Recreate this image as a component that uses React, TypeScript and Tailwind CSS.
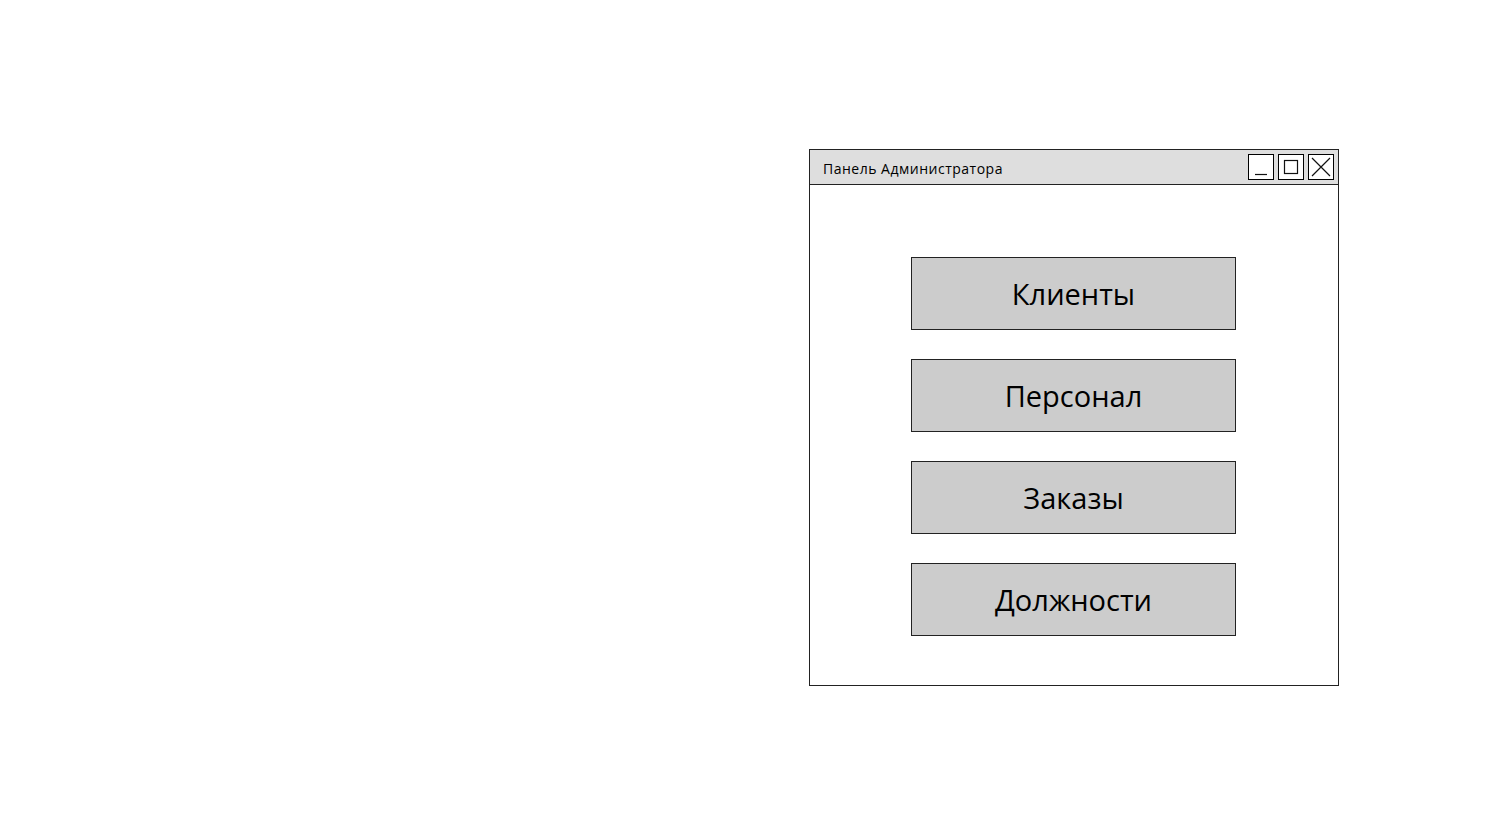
const items = ["Клиенты", "Персонал", "Заказы", "Должности"];

function WinButton({ kind }: { kind: "min" | "max" | "close" }) {
    return (
        <div className="w-[26px] h-[26px] border border-black bg-white flex items-center justify-center">
            <svg width="24" height="24" viewBox="0 0 24 24" fill="none" stroke="#111" strokeWidth="1.2">
                {kind === "min" && <path d="M6 19.5h12" />}
                {kind === "max" && <rect x="5.5" y="5.5" width="13" height="13" />}
                {kind === "close" && <path d="M3 3l18 18M21 3L3 21" />}
            </svg>
        </div>
    );
}

export default function App() {
    return (
        <div className="w-[1500px] h-[820px] bg-white pl-[809px] pt-[149px]" style={{ fontFamily: '"Comic Sans MS", "Open Sans", "Liberation Sans", sans-serif' }}>
            <div className="w-[530px] h-[537px] border border-[#222] flex flex-col bg-white">
                <div className="h-[35px] bg-[#dedede] border-b border-[#222] flex items-center pl-[13px] pr-[4px]">
                    <span className="text-[14px] font-medium text-black tracking-[0.5px] mt-[2px]">Панель Администратора</span>
                    <div className="ml-auto flex gap-[4px]">
                        <WinButton kind="min" />
                        <WinButton kind="max" />
                        <WinButton kind="close" />
                    </div>
                </div>
                <div className="flex flex-col items-center pt-[72px] gap-[29px] pr-[1px]">
                    {items.map((item) => (
                        <button
                            key={item}
                            className="w-[325px] h-[73px] bg-[#cccccc] border border-[#222] text-[29px] text-black flex items-center justify-center"
                        >
                            {item}
                        </button>
                    ))}
                </div>
            </div>
        </div>
    );
}
